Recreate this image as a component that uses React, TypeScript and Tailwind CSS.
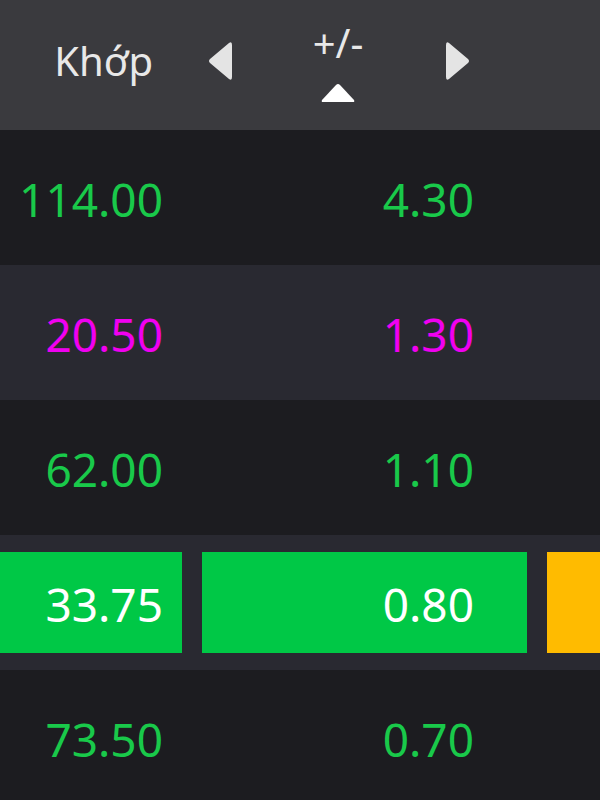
import React from "react";

const rows = [
  { a: "114.00", b: "4.30", color: "text-[#19c94a]", bg: "bg-[#1c1c20]" },
  { a: "20.50", b: "1.30", color: "text-[#f000f0]", bg: "bg-[#292931]" },
  { a: "62.00", b: "1.10", color: "text-[#19c94a]", bg: "bg-[#1c1c20]" },
  { a: "33.75", b: "0.80", color: "text-white", bg: "bg-[#292931]", hl: true },
  { a: "73.50", b: "0.70", color: "text-[#19c94a]", bg: "bg-[#1c1c20]" },
];

function Tri({ dir }: { dir: "left" | "right" | "up" }) {
  if (dir === "up")
    return (
      <svg width="36" height="20" viewBox="0 0 36 20">
        <path d="M16 2 Q18 0 20 2 L34 17 Q35 19 33 19 L3 19 Q1 19 2 17 Z" fill="#ffffff" />
      </svg>
    );
  const d =
    dir === "left"
      ? "M21 2 Q24 0 24 4 L24 36 Q24 40 21 38 L2 22 Q0 20 2 18 Z"
      : "M3 2 Q0 0 0 4 L0 36 Q0 40 3 38 L22 22 Q24 20 22 18 Z";
  return (
    <svg width="24" height="40" viewBox="0 0 24 40">
      <path d={d} fill="#e4e4e4" />
    </svg>
  );
}

export default function App() {
  return (
    <div className="w-[600px] h-[800px] overflow-hidden bg-[#1c1c20]" style={{ fontFamily: '"Noto Sans", "Open Sans", sans-serif' }}>
      <div className="h-[130px] bg-[#3a3a3e] flex items-start text-[#e8e8e8]">
        <div className="w-[182px] flex justify-end pr-[29px] pt-[33px] text-[40px] leading-[56px]">Khớp</div>
        <div className="pl-[26px] pt-[41px]">
          <Tri dir="left" />
        </div>
        <div className="ml-[78px] flex flex-col items-center w-[56px]">
          <div className="text-[40px] leading-[52px] pt-[17px]">+/-</div>
          <div className="mt-[14px]">
            <Tri dir="up" />
          </div>
        </div>
        <div className="ml-[80px] pt-[41px]">
          <Tri dir="right" />
        </div>
      </div>
      {rows.map((r, i) => (
        <div key={i} className={`h-[135px] ${r.bg} flex items-center gap-[20px] text-[46px] leading-none`}>
          {r.hl ? (
            <>
              <div className="w-[182px] h-[101px] bg-[#00c846] flex items-center justify-end pr-[19px] pt-[3px] text-white">{r.a}</div>
              <div className="w-[325px] h-[101px] bg-[#00c846] flex items-center justify-end pr-[53px] pt-[3px] text-white">{r.b}</div>
              <div className="flex-1 h-[101px] bg-[#ffbb00]" />
            </>
          ) : (
            <>
              <div className={`w-[182px] flex justify-end pr-[19px] pt-[3px] ${r.color}`}>{r.a}</div>
              <div className={`w-[325px] flex justify-end pr-[53px] pt-[3px] ${r.color}`}>{r.b}</div>
            </>
          )}
        </div>
      ))}
    </div>
  );
}
